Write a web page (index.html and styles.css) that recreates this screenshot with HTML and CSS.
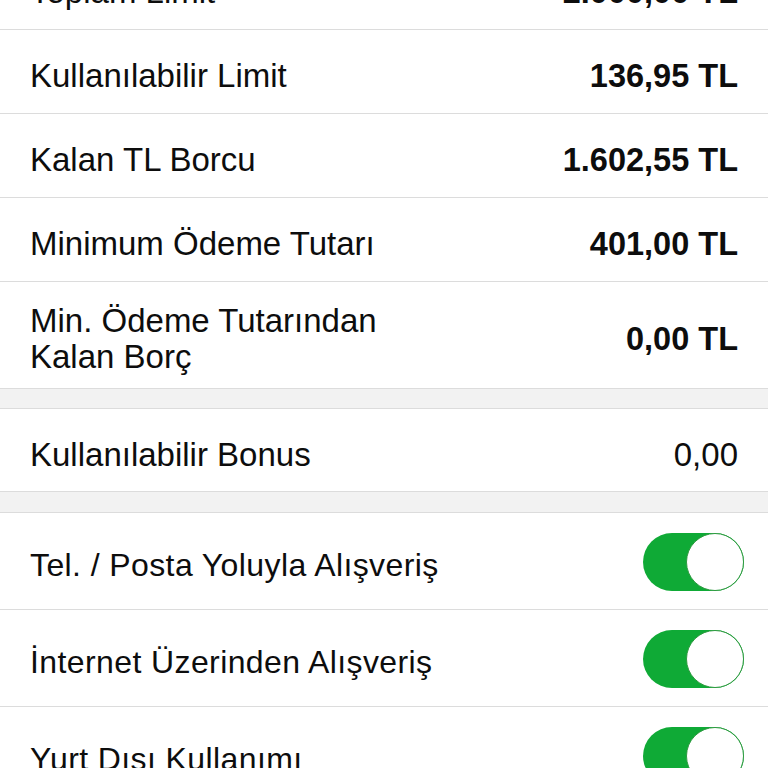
FILE: index.html
```html
<!DOCTYPE html>
<html lang="tr">
<head>
<meta charset="utf-8">
<link rel="stylesheet" href="styles.css">
</head>
<body>
<div class="screen">
  <div class="row">
    <span class="label">Toplam Limit</span>
    <span class="value">2.000,00 TL</span>
  </div>
  <div class="row">
    <span class="label">Kullanılabilir Limit</span>
    <span class="value">136,95 TL</span>
  </div>
  <div class="row">
    <span class="label">Kalan TL Borcu</span>
    <span class="value">1.602,55 TL</span>
  </div>
  <div class="row">
    <span class="label">Minimum Ödeme Tutarı</span>
    <span class="value">401,00 TL</span>
  </div>
  <div class="row row-tall">
    <span class="label label-multi">Min. Ödeme Tutarından<br>Kalan Borç</span>
    <span class="value">0,00 TL</span>
  </div>
  <div class="gap"></div>
  <div class="row row-bonus">
    <span class="label">Kullanılabilir Bonus</span>
    <span class="value value-light">0,00</span>
  </div>
  <div class="gap gap-2"></div>
  <div class="row row-toggle">
    <span class="label label-toggle">Tel. / Posta Yoluyla Alışveriş</span>
    <span class="switch"><span class="knob"></span></span>
  </div>
  <div class="row row-toggle">
    <span class="label label-toggle">İnternet Üzerinden Alışveriş</span>
    <span class="switch"><span class="knob"></span></span>
  </div>
  <div class="row row-toggle">
    <span class="label label-toggle">Yurt Dışı Kullanımı</span>
    <span class="switch"><span class="knob"></span></span>
  </div>
</div>
</body>
</html>
```
FILE: styles.css
```css
html, body {
  margin: 0;
  padding: 0;
  background: #ffffff;
  overflow: hidden;
}
body {
  font-family: "Liberation Sans", Arial, sans-serif;
  color: #0d0d0d;
}
.screen {
  margin-top: -54px;
  display: flex;
  flex-direction: column;
}
.row {
  display: flex;
  justify-content: space-between;
  align-items: center;
  box-sizing: border-box;
  height: 84px;
  padding: 9px 30px 0 30px;
  border-bottom: 1px solid #dcdcdc;
  background: #ffffff;
}
.row-tall {
  height: 107px;
  padding-top: 8px;
}
.row-bonus {
  height: 83px;
  padding-top: 10px;
}
.row-toggle {
  height: 97px;
  padding-top: 8px;
  padding-right: 24px;
}
.label {
  font-size: 33px;
  line-height: 38px;
  letter-spacing: 0;
}
.label-multi {
  line-height: 36px;
}
.label-toggle {
  font-size: 32px;
  letter-spacing: 0.4px;
}
.value {
  font-size: 32.5px;
  font-weight: bold;
  line-height: 38px;
}
.value-light {
  font-weight: normal;
  font-size: 33px;
}
.gap {
  box-sizing: border-box;
  height: 20px;
  background: #f2f2f2;
  border-bottom: 1px solid #dcdcdc;
}
.gap-2 {
  height: 21px;
}
.switch {
  display: flex;
  justify-content: flex-end;
  width: 101px;
  height: 58px;
  border-radius: 29px;
  background: #0faa36;
  margin-bottom: 6px;
}
.knob {
  box-sizing: border-box;
  width: 58px;
  height: 58px;
  border-radius: 50%;
  background: #ffffff;
  border: 1.5px solid #2e9a40;
}
```
